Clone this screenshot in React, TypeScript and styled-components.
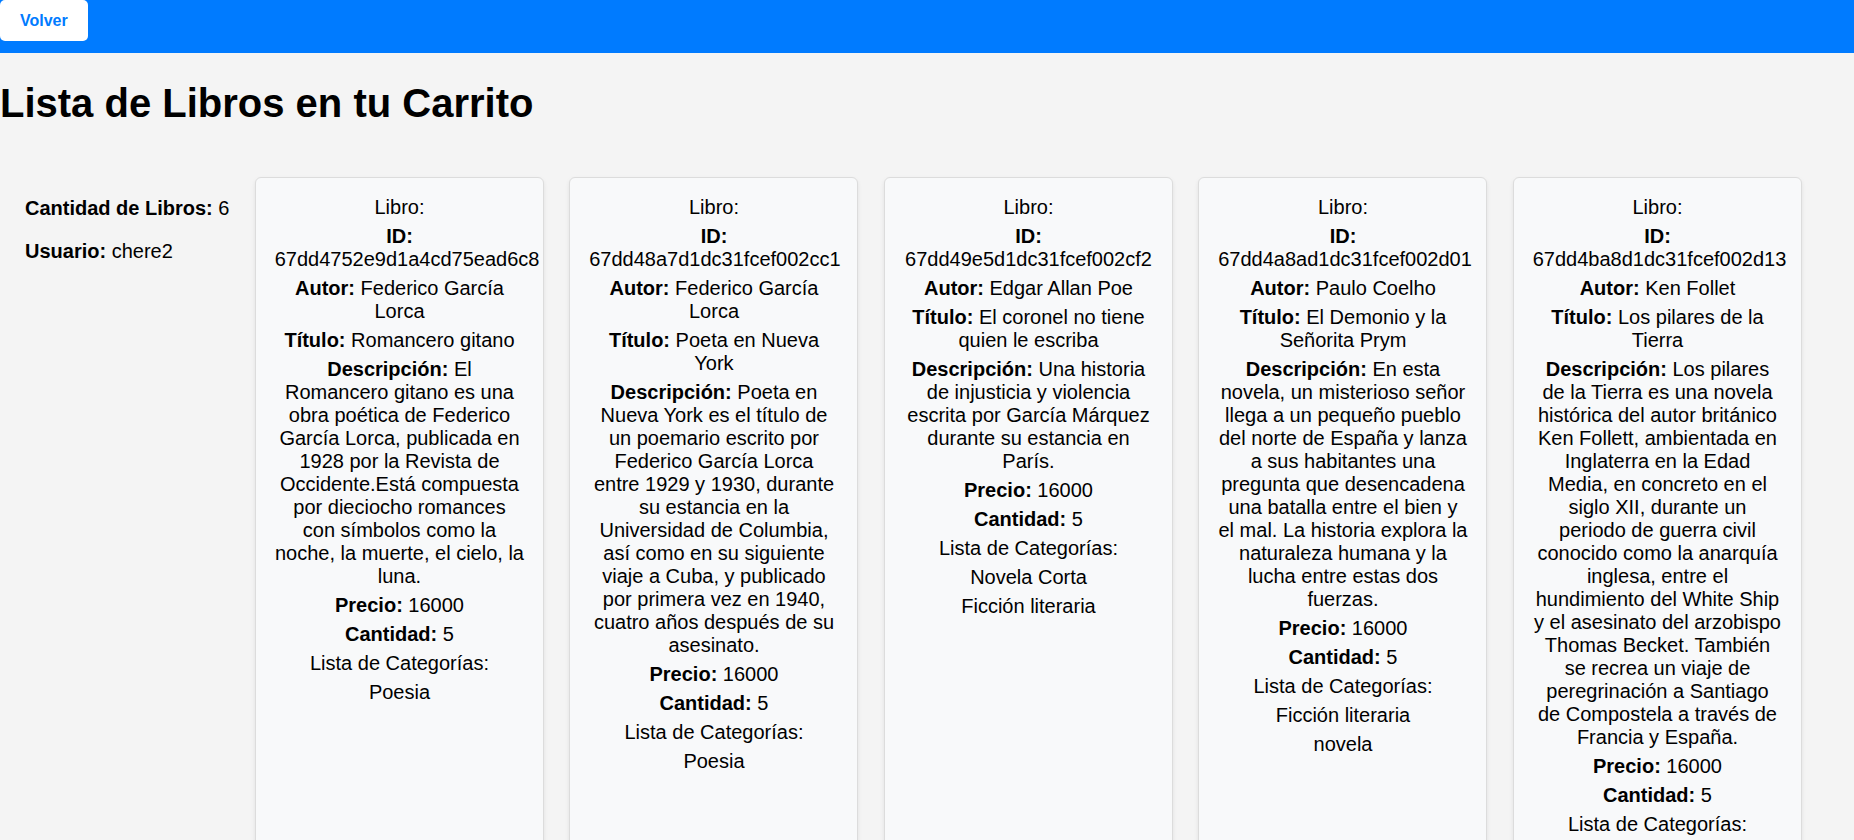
import React from "react";
import styled, { createGlobalStyle } from "styled-components";

const GlobalStyle = createGlobalStyle`
  html, body {
    margin: 0;
    padding: 0;
  }
  body {
    background: #f4f4f4;
    font-family: "Liberation Sans", Arial, Helvetica, sans-serif;
    font-size: 20px;
    line-height: 23px;
    color: #000;
  }
`;

const Header = styled.header`
  background: #007bff;
  height: 53px;
  display: flex;
  align-items: flex-start;
`;

const BackButton = styled.button`
  background: #ffffff;
  color: #007bff;
  border: none;
  border-radius: 5px;
  height: 41px;
  padding: 0 20px;
  font-family: "Liberation Sans", Arial, sans-serif;
  font-size: 16px;
  font-weight: 700;
  cursor: pointer;
`;

const Title = styled.h1`
  font-size: 40px;
  line-height: 46px;
  font-weight: 700;
  margin: 26.8px 0;
`;

const Main = styled.main`
  display: flex;
  align-items: flex-start;
  gap: 25.5px;
  padding-top: 24.7px;
`;

const Sidebar = styled.aside`
  flex: 0 0 229px;
  box-sizing: border-box;
  padding-left: 25px;
  white-space: nowrap;
`;

const SideLine = styled.p`
  margin: 20px 0;
`;

const CardList = styled.section`
  flex: 1;
  display: flex;
  flex-wrap: wrap;
  align-items: stretch;
  gap: 25.5px;
`;

const Card = styled.article`
  width: 249.5px;
  padding: 11.5px 18.75px 18.75px;
  background: #f8f9fa;
  border: 1px solid #dcdcdc;
  border-radius: 6px;
  box-shadow: 0 2px 4px rgba(0, 0, 0, 0.08);
  text-align: center;
`;

const Field = styled.p`
  margin: 6px 0;
`;

const Label = styled.strong`
  font-weight: 700;
`;

const CategoryList = styled.ul`
  list-style: none;
  margin: 0;
  padding: 0;
`;

const CategoryItem = styled.li`
  margin: 6px 0;
`;

type Book = {
  id: string;
  autor: string;
  titulo: string;
  descripcion: string;
  precio: number;
  cantidad: number;
  categorias: string[];
};

const books: Book[] = [
  {
    id: "67dd4752e9d1a4cd75ead6c8",
    autor: "Federico García Lorca",
    titulo: "Romancero gitano",
    descripcion:
      "El Romancero gitano es una obra poética de Federico García Lorca, publicada en 1928 por la Revista de Occidente.Está compuesta por dieciocho romances con símbolos como la noche, la muerte, el cielo, la luna.",
    precio: 16000,
    cantidad: 5,
    categorias: ["Poesia"],
  },
  {
    id: "67dd48a7d1dc31fcef002cc1",
    autor: "Federico García Lorca",
    titulo: "Poeta en Nueva York",
    descripcion:
      "Poeta en Nueva York es el título de un poemario escrito por Federico García Lorca entre 1929 y 1930, durante su estancia en la Universidad de Columbia, así como en su siguiente viaje a Cuba, y publicado por primera vez en 1940, cuatro años después de su asesinato.",
    precio: 16000,
    cantidad: 5,
    categorias: ["Poesia"],
  },
  {
    id: "67dd49e5d1dc31fcef002cf2",
    autor: "Edgar Allan Poe",
    titulo: "El coronel no tiene quien le escriba",
    descripcion:
      "Una historia de injusticia y violencia escrita por García Márquez durante su estancia en París.",
    precio: 16000,
    cantidad: 5,
    categorias: ["Novela Corta", "Ficción literaria"],
  },
  {
    id: "67dd4a8ad1dc31fcef002d01",
    autor: "Paulo Coelho",
    titulo: "El Demonio y la Señorita Prym",
    descripcion:
      "En esta novela, un misterioso señor llega a un pequeño pueblo del norte de España y lanza a sus habitantes una pregunta que desencadena una batalla entre el bien y el mal. La historia explora la naturaleza humana y la lucha entre estas dos fuerzas.",
    precio: 16000,
    cantidad: 5,
    categorias: ["Ficción literaria", "novela"],
  },
  {
    id: "67dd4ba8d1dc31fcef002d13",
    autor: "Ken Follet",
    titulo: "Los pilares de la Tierra",
    descripcion:
      "Los pilares de la Tierra es una novela histórica del autor británico Ken Follett, ambientada en Inglaterra en la Edad Media, en concreto en el siglo XII, durante un periodo de guerra civil conocido como la anarquía inglesa, entre el hundimiento del White Ship y el asesinato del arzobispo Thomas Becket. También se recrea un viaje de peregrinación a Santiago de Compostela a través de Francia y España.",
    precio: 16000,
    cantidad: 5,
    categorias: ["Novela histórica"],
  },
];

function BookCard({ book }: { book: Book }) {
  return (
    <Card>
      <Field>Libro:</Field>
      <Field>
        <Label>ID:</Label> {book.id}
      </Field>
      <Field>
        <Label>Autor:</Label> {book.autor}
      </Field>
      <Field>
        <Label>Título:</Label> {book.titulo}
      </Field>
      <Field>
        <Label>Descripción:</Label> {book.descripcion}
      </Field>
      <Field>
        <Label>Precio:</Label> {book.precio}
      </Field>
      <Field>
        <Label>Cantidad:</Label> {book.cantidad}
      </Field>
      <Field>Lista de Categorías:</Field>
      <CategoryList>
        {book.categorias.map((c) => (
          <CategoryItem key={c}>{c}</CategoryItem>
        ))}
      </CategoryList>
    </Card>
  );
}

export default function App() {
  return (
    <>
      <GlobalStyle />
      <Header>
        <BackButton>Volver</BackButton>
      </Header>
      <Title>Lista de Libros en tu Carrito</Title>
      <Main>
        <Sidebar>
          <SideLine>
            <Label>Cantidad de Libros:</Label> 6
          </SideLine>
          <SideLine>
            <Label>Usuario:</Label> chere2
          </SideLine>
        </Sidebar>
        <CardList>
          {books.map((b) => (
            <BookCard key={b.id} book={b} />
          ))}
        </CardList>
      </Main>
    </>
  );
}
